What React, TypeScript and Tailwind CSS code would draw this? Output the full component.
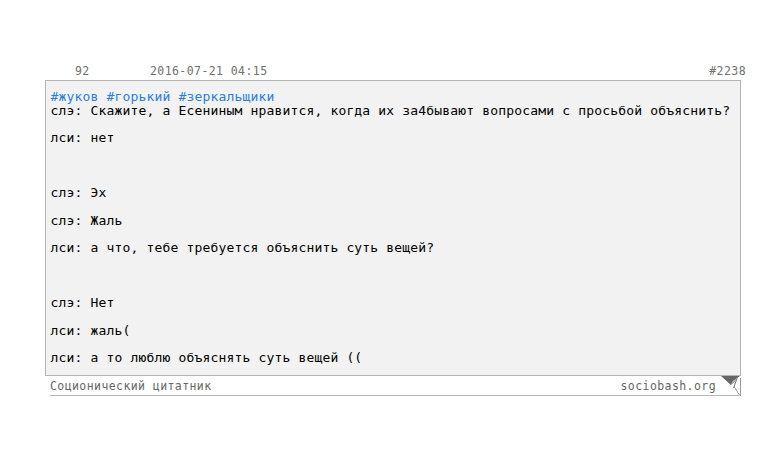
const LINES = [
  'слэ: Скажите, а Есениным нравится, когда их за4бывают вопросами с просьбой объяснить?',
  'лси: нет',
  '',
  'слэ: Эх',
  'слэ: Жаль',
  'лси: а что, тебе требуется объяснить суть вещей?',
  '',
  'слэ: Нет',
  'лси: жаль(',
  'лси: а то люблю объяснять суть вещей ((',
];

const TAGS = ['#жуков', '#горький', '#зеркальщики'];

const CornerFold = () => (
  <svg width="20" height="20" viewBox="0 0 20 20" className="absolute right-0 top-0">
    <path d="M0 0H20V20H19L9 9Z" fill="#fff" />
    <path d="M0 0H19L12 5L10 9Z" fill="#666666" />
    <path d="M19.5 2V20M12 9L18.5 19" fill="none" stroke="#9a9a9a" />
    <path d="M9.5 9L16 2.5L12.5 12" fill="#fff" stroke="#777777" />
  </svg>
);

export default function App() {
  return (
    <div className="h-[470px] w-[780px] bg-white pl-[45px] pt-[64px] font-['DejaVu_Sans_Mono',monospace] text-[11.5px] tracking-[0.42px]">
      <div className="flex w-[696px] justify-between text-[#707070]">
        <div className="flex h-4 items-center">
          <span className="ml-[30px] w-[75px]">92</span>
          <span>2016-07-21 04:15</span>
        </div>
        <span className="mr-[-5px] flex h-4 items-center">#2238</span>
      </div>
      <div className="h-[296px] w-[696px] border border-[#b5b5b5] bg-[#f2f2f2] pl-[4.5px] pt-[7px] text-[13px] leading-[15px] tracking-[0.17px] text-black">
        <div className="flex h-[14.6px] gap-[8px] leading-[17px] text-[#2a7ee0]">
          {TAGS.map(tag => (
            <span key={tag}>{tag}</span>
          ))}
        </div>
        {LINES.map((line, index) => (
          <p key={index} className="mb-[12.5px] h-[15px] whitespace-pre">
            {line}
          </p>
        ))}
      </div>
      <div className="relative ml-[5px] flex h-5 w-[691px] items-center justify-between border-b border-[#b5b5b5] pr-[25px] pt-[3px] text-[#666666]">
        <span>Соционический цитатник</span>
        <span>sociobash.org</span>
        <CornerFold />
      </div>
    </div>
  );
}
